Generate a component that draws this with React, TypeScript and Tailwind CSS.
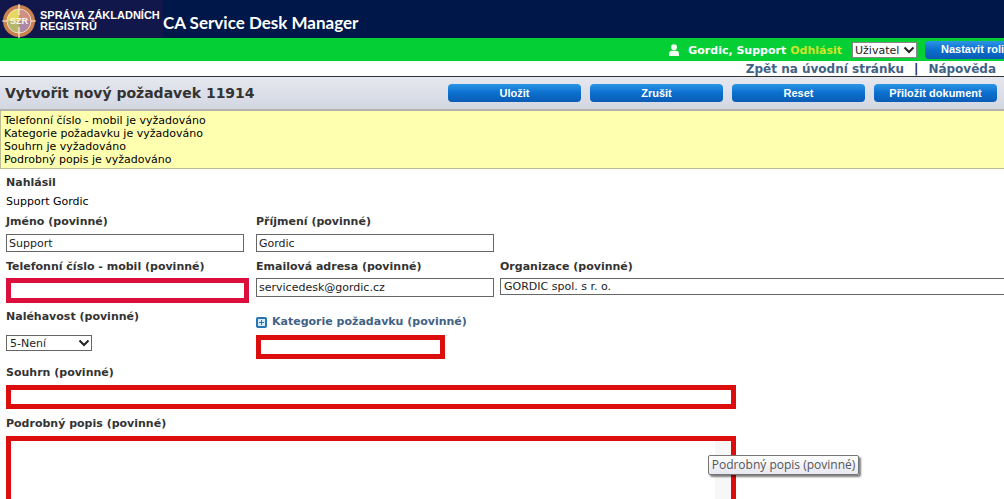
import React from "react";

const messages = [
  "Telefonní číslo - mobil je vyžadováno",
  "Kategorie požadavku je vyžadováno",
  "Souhrn je vyžadováno",
  "Podrobný popis je vyžadováno",
];

const labelClass = "block font-bold leading-4 text-[#333333]";
const inputClass = "block border border-[#666666] bg-white pl-0.5 text-[#222222] outline-none";
const buttonClass =
  "h-[18px] rounded-sm bg-linear-to-b from-[#2b95e6] via-[#0a6fcd] to-[#0b5cb5] text-center font-['Liberation_Sans',sans-serif] font-bold text-white whitespace-nowrap";

const Chevron: React.FC = () => (
  <svg
    viewBox="0 0 12 8"
    className="pointer-events-none absolute right-0.5 top-1/2 h-2 w-3 -translate-y-1/2"
    fill="none"
    stroke="#222"
    strokeWidth="2"
  >
    <path d="M1.5 1.5 6 6l4.500-4.500" />
  </svg>
);

const Logo: React.FC = () => (
  <svg viewBox="0 0 34 34" className="h-[34px] w-[34px] shrink-0">
    <circle cx="17" cy="17" r="16" fill="#c9824f" />
    <path d="M17 17V5A12 12 0 0 0 5 17z" fill="#e6d95e" />
    <path d="M17 17H5A12 12 0 0 0 17 29z" fill="#b5b56c" />
    <path d="M17 17V5A12 12 0 0 1 29 17z" fill="#d08f86" />
    <path d="M17 17H29A12 12 0 0 1 17 29z" fill="#ad86a5" />
    <circle cx="17" cy="17" r="12" fill="none" stroke="#f0dcc4" strokeWidth="1" />
    <path d="M17 0v11M17 23v11M0 17h5M29 17h5" stroke="#fff3dc" strokeWidth="1.200" />
    <text
      x="17"
      y="20"
      textAnchor="middle"
      fontSize="9"
      fontWeight="bold"
      fontFamily="Liberation Sans, sans-serif"
      fill="#fff6e8"
    >
      SZR
    </text>
  </svg>
);

const App: React.FC = () => {
  return (
    <div className="h-screen overflow-hidden bg-white font-['DejaVu_Sans',sans-serif] text-[11px]">
      {/* Hlavička */}
      <header className="flex h-[38px] items-center bg-[#00174a]">
        <div className="flex h-full w-[163px] items-center gap-1 bg-[#11164b] pl-0.5 pt-1">
          <Logo />
          <div className="whitespace-nowrap font-['Liberation_Sans',sans-serif] text-[11px] font-bold leading-[11px] text-white">
            SPRÁVA ZÁKLADNÍCH
            <br />
            REGISTRŮ
          </div>
        </div>
        <h1 className="pt-2 font-['Lato',sans-serif] text-[17px] font-bold leading-5 text-white">
          CA Service Desk Manager
        </h1>
      </header>

      {/* Přihlášený uživatel */}
      <div className="flex h-[23px] items-center justify-end bg-[#04cf35] font-bold">
        <svg viewBox="0 0 12 12" className="mr-2 h-3 w-3" fill="#f2fff2">
          <circle cx="6" cy="3.200" r="3" />
          <path d="M1 12V9.500Q1 7 4 6.700h4Q11 7 11 9.500V12z" />
        </svg>
        <span className="self-end leading-5 text-white">Gordic, Support</span>
        <a href="#odhlasit" className="ml-1 self-end leading-5 text-[#d0e62a]">
          Odhlásit
        </a>
        <div className="relative ml-2.5">
          <select
            aria-label="Role"
            className="block h-4 w-[65px] appearance-none border border-[#888888] bg-white pl-0.5 font-normal text-[#222222]"
          >
            <option>Uživatel</option>
          </select>
          <Chevron />
        </div>
        <button className={`${buttonClass} ml-2 rounded-r-none pl-4`}>Nastavit roli</button>
      </div>

      <nav className="flex h-[15px] items-center justify-end gap-2.5 pr-2 text-xs font-bold leading-4 text-[#3f6285]">
        <a href="#uvod">Zpět na úvodní stránku</a>
        <span className="text-[#222222]">|</span>
        <a href="#napoveda">Nápověda</a>
      </nav>

      {/* Název a akce */}
      <div className="flex h-[35px] items-center justify-between border-b-2 border-t border-b-[#b3b3ac] border-t-[#333333] bg-linear-to-b from-[#e6e8ef] to-[#d3d7e2] pl-[5px] pr-[7px]">
        <h2 className="text-sm font-bold text-[#333333]">Vytvořit nový požadavek 11914</h2>
        <div className="flex gap-[9px]">
          <button className={`${buttonClass} w-[133px]`}>Uložit</button>
          <button className={`${buttonClass} w-[133px]`}>Zrušit</button>
          <button className={`${buttonClass} w-[133px]`}>Reset</button>
          <button className={`${buttonClass} w-[123px]`}>Přiložit dokument</button>
        </div>
      </div>

      <ul className="border-b border-l border-[#bdbd94] bg-[#ffffb0] pb-0.5 pl-[3px] pt-[3px] leading-[13px] text-black">
        {messages.map((message) => (
          <li key={message}>{message}</li>
        ))}
      </ul>

      {/* Formulář */}
      <form className="pl-1.5 pt-1.5">
        <h3 className={labelClass}>Nahlásil</h3>
        <p className="mt-[3px] leading-4 text-black">Support Gordic</p>

        <div className="mt-1 grid grid-cols-[250px_244px_1fr]">
          <div>
            <label htmlFor="jmeno" className={labelClass}>
              Jméno (povinné)
            </label>
            <input id="jmeno" defaultValue="Support" className={`${inputClass} mt-1 h-[18px] w-[238px]`} />
          </div>
          <div>
            <label htmlFor="prijmeni" className={labelClass}>
              Příjmení (povinné)
            </label>
            <input id="prijmeni" defaultValue="Gordic" className={`${inputClass} mt-1 h-[18px] w-[238px]`} />
          </div>
        </div>

        <div className="mt-[7px] grid grid-cols-[250px_244px_1fr]">
          <div>
            <label htmlFor="telefon" className={labelClass}>
              Telefonní číslo - mobil (povinné)
            </label>
            <input id="telefon" className="mt-[3px] block h-[25px] w-[243px] border-[5px] border-[#dc0f3c] bg-white outline-none" />
          </div>
          <div>
            <label htmlFor="email" className={labelClass}>
              Emailová adresa (povinné)
            </label>
            <input id="email" defaultValue="servicedesk@gordic.cz" className={`${inputClass} mt-[3px] h-[19px] w-[238px]`} />
          </div>
          <div>
            <label htmlFor="organizace" className={labelClass}>
              Organizace (povinné)
            </label>
            <input
              id="organizace"
              defaultValue="GORDIC spol. s r. o."
              className="mt-[3px] block h-[17px] w-full border border-r-0 border-[#666666] bg-white pl-[3px] text-[#222222] outline-none"
            />
          </div>
        </div>

        <div className="mt-1.5 grid grid-cols-[250px_1fr]">
          <div>
            <label htmlFor="nalehavost" className={labelClass}>
              Naléhavost (povinné)
            </label>
            <div className="relative mt-2.5 w-[86px]">
              <select
                id="nalehavost"
                className="block h-4 w-full appearance-none border border-[#666666] bg-white pl-[3px] text-[#222222]"
              >
                <option>5-Není</option>
              </select>
              <Chevron />
            </div>
          </div>
          <div className="pt-[5px]">
            <a id="kategorie" href="#kategorie" className="flex items-center gap-[5px] font-bold leading-4 text-[#3f6285]">
              <svg viewBox="0 0 11 11" className="h-[11px] w-[11px]">
                <rect width="11" height="11" rx="2" fill="#2675b0" />
                <rect x="2" y="2" width="7" height="7" fill="#d7ecf8" />
                <path d="M5.500 3v5M3 5.500h5" stroke="#2675b0" />
              </svg>
              Kategorie požadavku (povinné)
            </a>
            <input
              aria-labelledby="kategorie"
              className="mt-[5px] block h-6 w-[189px] border-[5px] border-[#dc0d0d] bg-white outline-none"
            />
          </div>
        </div>

        <label htmlFor="souhrn" className={`${labelClass} mt-1.5`}>
          Souhrn (povinné)
        </label>
        <input id="souhrn" className="mt-1 block h-6 w-[730px] border-[5px] border-[#dc0d0d] bg-white outline-none" />

        <label htmlFor="popis" className={`${labelClass} mt-[7px]`}>
          Podrobný popis (povinné)
        </label>
        <div className="relative mt-1 flex h-40 w-[730px] border-[5px] border-[#dc0d0d]">
          <textarea id="popis" className="min-w-0 flex-1 resize-none bg-white outline-none" />
          <div className="w-4 bg-[#f7f7f7]" />
          <div
            role="tooltip"
            className="absolute left-[697px] top-[14px] flex h-5 w-[151px] items-center justify-center whitespace-nowrap rounded-xs border border-[#767676] bg-linear-to-b from-white to-[#e6e7f0] font-['Open_Sans',sans-serif] text-xs text-[#555555] shadow-[2px_2px_2px_#00000080]"
          >
            Podrobný popis (povinné)
          </div>
        </div>
      </form>
    </div>
  );
};

export default App;
